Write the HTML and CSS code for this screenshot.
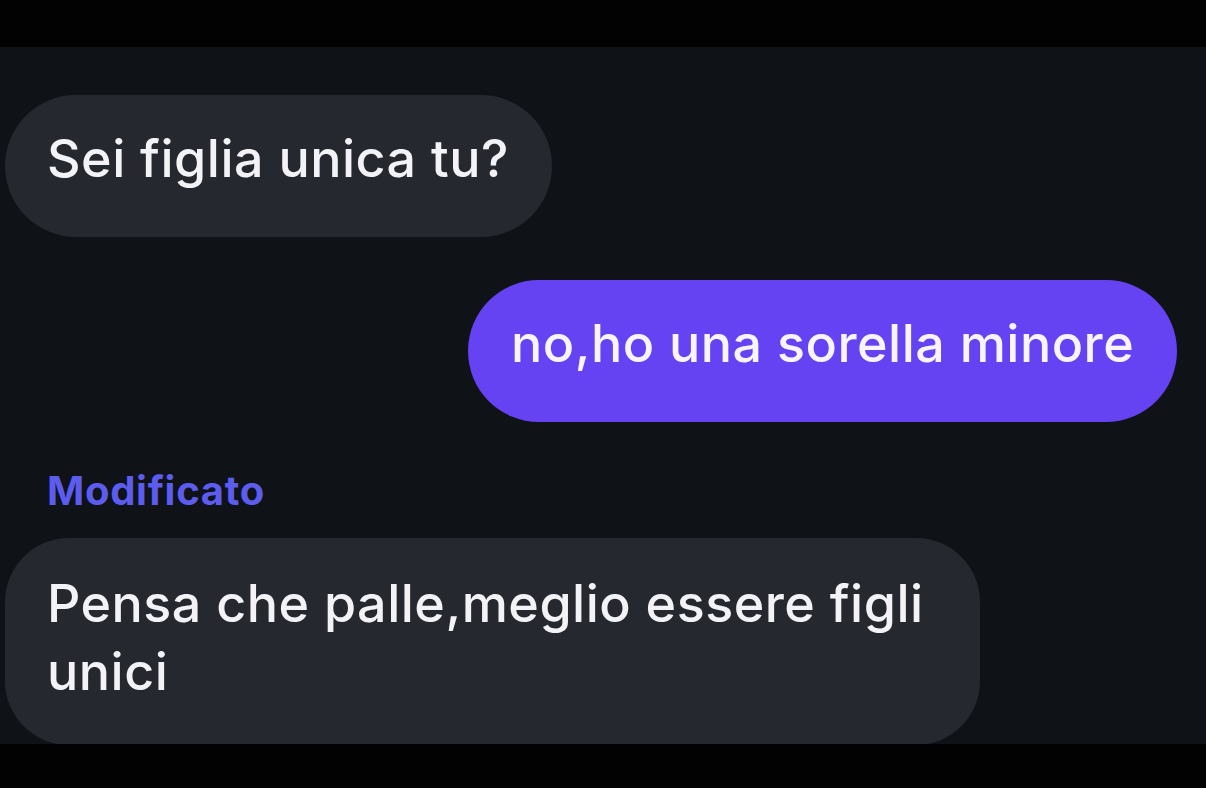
FILE: index.html
```html
<!DOCTYPE html>
<html lang="it">
<head>
<meta charset="utf-8">
<link rel="stylesheet" href="styles.css">
</head>
<body>
  <div class="bar bar-top"></div>
  <main class="chat">
    <div class="bubble incoming b1">Sei figlia unica tu?</div>
    <div class="bubble outgoing b2">no,ho una sorella minore</div>
    <div class="edited-label">Modificato</div>
    <div class="bubble incoming b3">Pensa che palle,meglio essere figli unici</div>
  </main>
  <div class="bar bar-bottom"></div>
</body>
</html>
```

FILE: styles.css
```css
html, body {
  margin: 0;
  padding: 0;
  background: #020203;
  width: 1206px;
  height: 788px;
  overflow: hidden;
  font-family: Inter, "Noto Sans", "Liberation Sans", sans-serif;
}

.bar-top {
  height: 47px;
}

.bar-bottom {
  height: 44px;
}

.chat {
  height: 697px;
  box-sizing: border-box;
  background: #0f1318;
  overflow: hidden;
  display: flex;
  flex-direction: column;
  padding: 48px 29px 0 5px;
}

.bubble {
  box-sizing: border-box;
  font-size: 52px;
  font-weight: 500;
  line-height: 68px;
  color: #f3f3f7;
  letter-spacing: 0.5px;
  flex-shrink: 0;
}

.incoming {
  align-self: flex-start;
  background: #25282e;
}

.outgoing {
  align-self: flex-end;
  background: #6543f3;
  color: #f7f4fb;
}

.b1 {
  width: 547px;
  height: 142px;
  border-radius: 71px;
  padding: 30px 0 0 42px;
}

.b2 {
  width: 709px;
  height: 142px;
  border-radius: 71px;
  margin-top: 43px;
  padding: 30px 0 0 43px;
}

.edited-label {
  margin: 46px 0 0 42px;
  font-size: 40px;
  font-weight: 700;
  line-height: 46px;
  letter-spacing: 0.7px;
  color: #5c5cef;
  flex-shrink: 0;
}

.b3 {
  width: 975px;
  margin-top: 24px;
  border-radius: 64px;
  padding: 32px 30px 39px 42px;
}
```
